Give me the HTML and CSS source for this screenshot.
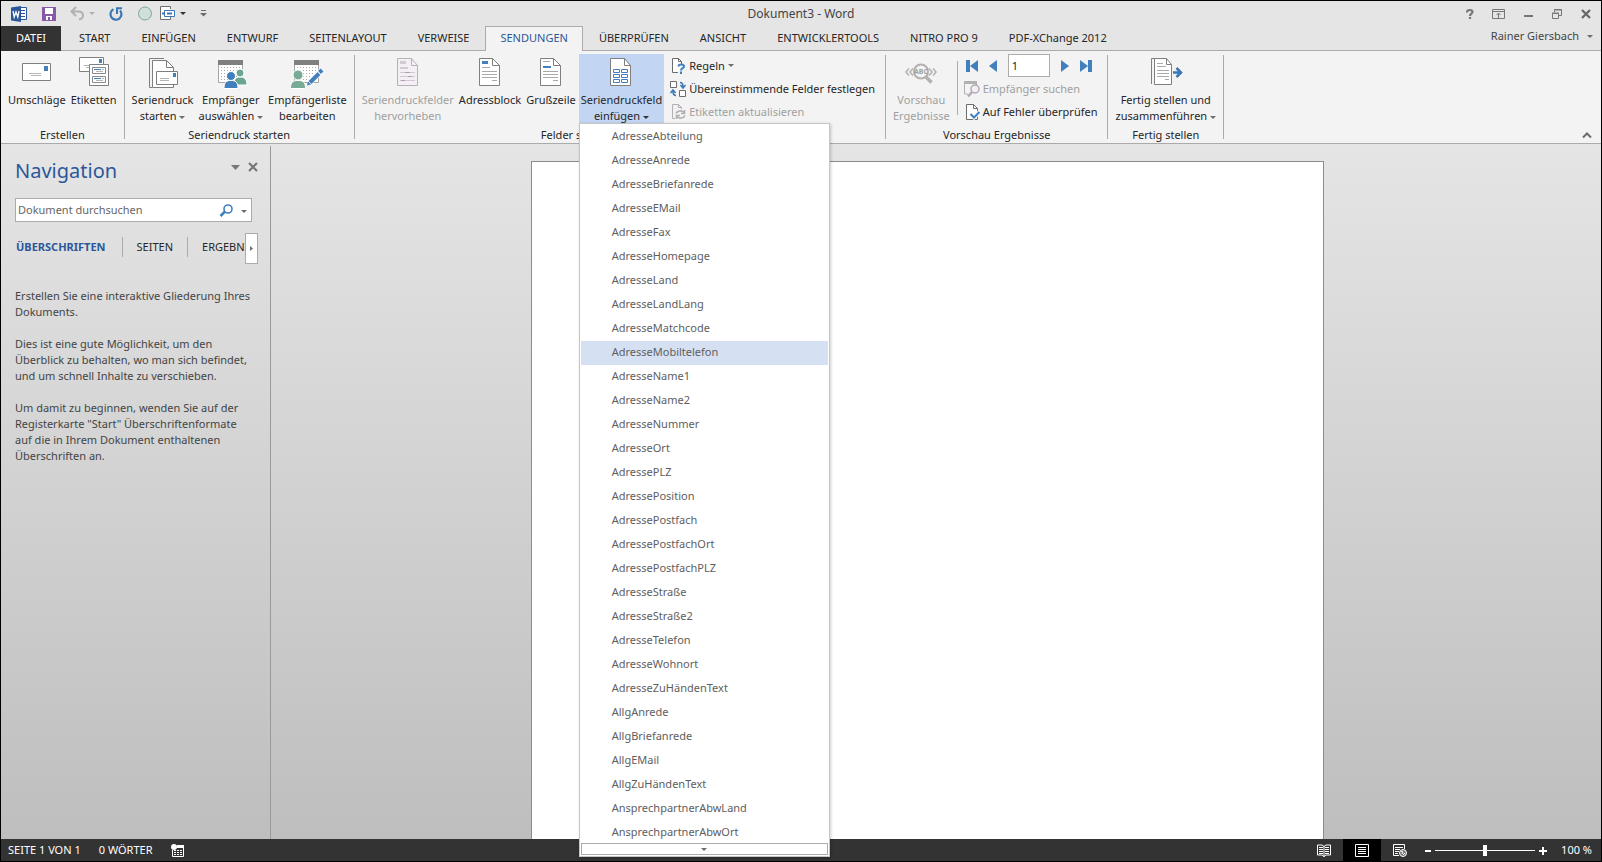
FILE: index.html
```html
<!DOCTYPE html>
<html lang="de">
<head>
    <meta charset="UTF-8">
    <meta name="viewport" content="width=device-width, initial-scale=1.0">
    <title>Dokument3 - Word</title>
    <link rel="stylesheet" href="styles.css">
</head>
<body>
    <div class="window">
        <header class="titlebar">
            <div class="quick-access">
                <button class="qa-btn" aria-label="Word">
                    <svg width="18" height="18" viewBox="0 0 18 18"><path d="M9 2.500h7.500v12H9" fill="#fff" stroke="#2b579a"/><path d="M10 5.500h5M10 8.500h5M10 11.500h5" stroke="#2b579a"/><path d="M1 2.500 11 1v16L1 15.500z" fill="#2b579a"/><path d="M3 6l1.200 6L6 7l1.800 5L9 6" fill="none" stroke="#fff" stroke-width="1.300"/></svg>
                </button>
                <button class="qa-btn" aria-label="Speichern">
                    <svg width="14" height="14" viewBox="0 0 14 14"><path d="M0 0h14v14H0z" fill="#8858a8"/><path d="M3 1h8v6H3zM4 9h6v4H8v-3H6v3H4z" fill="#fff"/></svg>
                </button>
                <button class="qa-btn" aria-label="Rückgängig">
                    <svg width="14" height="14" viewBox="0 0 14 14"><path d="M6 0 1.500 4.500 6 9M2 4.500h6c3 0 5 1.500 5 4 0 2-1.500 3.500-4 4" fill="none" stroke="#b1b1b1" stroke-width="2"/></svg>
                    <i class="caret caret-off"></i>
                </button>
                <button class="qa-btn" aria-label="Wiederholen">
                    <svg width="14" height="14" viewBox="0 0 14 14"><path d="M4.500 2.300A5.500 5.500 0 1 0 11 3.500" fill="none" stroke="#3b76b5" stroke-width="2.200"/><path d="M7 1.200h6M8 1v6" fill="none" stroke="#3b76b5" stroke-width="2"/></svg>
                </button>
                <div class="qa-pair">
                    <button class="qa-btn" aria-label="Kreis">
                        <svg width="15" height="15" viewBox="0 0 15 15"><circle cx="8" cy="7.500" r="6.500" fill="#cfe0d8" stroke="#78ab95"/></svg>
                    </button>
                    <button class="qa-btn" aria-label="Einfügen">
                        <svg width="16" height="15" viewBox="0 0 16 15"><path d="M11.500 3V.500H1.500v13h10V11" fill="#fff" stroke="#6d6d6d"/><path d="M5.500 4.500h10v6h-10z" fill="#fff" stroke="#3b76b5"/><path d="M3 7.500h3M8 7.500h5" stroke="#3b76b5" stroke-width="2"/></svg>
                        <i class="caret caret-dark"></i>
                    </button>
                </div>
                <button class="qa-btn" aria-label="Symbolleiste anpassen">
                    <svg width="7" height="7" viewBox="0 0 7 7"><path d="M1 .500h5" stroke="#6d6d6d"/><path d="M0 3h7L3.500 6.500z" fill="#6d6d6d"/></svg>
                </button>
            </div>
            <h1 class="title">Dokument3 - Word</h1>
            <div class="window-buttons">
                <button aria-label="Hilfe"><svg width="8" height="10" viewBox="0 0 8 10"><path d="M1 3.500C1 1.500 2.300 1 3.800 1S6.500 1.500 6.500 3C6.500 4.800 4 4.500 4 7M4 8v2" fill="none" stroke="#777" stroke-width="2.200"/></svg></button>
                <button aria-label="Menüband-Anzeigeoptionen"><svg width="13" height="10" viewBox="0 0 13 10"><path d="M.500.500h12v9H.500zM1 2.500h11M6.500 9V4.500M4.500 6l2-2 2 2" fill="none" stroke="#777"/></svg></button>
                <button aria-label="Minimieren"><svg width="10" height="10" viewBox="0 0 10 10"><path d="M1 7h9" stroke="#777" stroke-width="2"/></svg></button>
                <button aria-label="Wiederherstellen"><svg width="10" height="10" viewBox="0 0 10 10"><path d="M2.500 3V.500h7v6H7M2 1h8M.500 4.500h6v5h-6zM0 4h7" fill="none" stroke="#777"/></svg></button>
                <button aria-label="Schließen"><svg width="10" height="10" viewBox="0 0 10 10"><path d="M1 1l8 8M9 1 1 9" stroke="#666" stroke-width="2.200"/></svg></button>
            </div>
        </header>

        <nav class="tabs">
            <button class="tab tab-file">DATEI</button>
            <button class="tab">START</button>
            <button class="tab">EINFÜGEN</button>
            <button class="tab">ENTWURF</button>
            <button class="tab">SEITENLAYOUT</button>
            <button class="tab">VERWEISE</button>
            <button class="tab active">SENDUNGEN</button>
            <button class="tab">ÜBERPRÜFEN</button>
            <button class="tab">ANSICHT</button>
            <button class="tab">ENTWICKLERTOOLS</button>
            <button class="tab">NITRO PRO 9</button>
            <button class="tab">PDF-XChange 2012</button>
            <button class="account">Rainer Giersbach <i class="caret"></i></button>
        </nav>

        <section class="ribbon">
            <div class="group">
                <div class="group-body">
                    <button class="big">
                        <svg width="32" height="32" viewBox="0 0 32 32"><path d="M1.500 7.500h28v17h-28z" fill="#fff" stroke="#7f7f7f"/><path d="M23 10h4v5h-4z" fill="#4180bd"/><path d="M8 17.500h12M10 19.500h10" stroke="#b5b5b5"/></svg>
                        <span>Umschläge</span>
                    </button>
                    <button class="big">
                        <svg width="32" height="32" viewBox="0 0 32 32"><path d="M1.500 1.500h24v14h-24z" fill="#fff" stroke="#7f7f7f"/><path d="M21 3h3v4h-3z" fill="#4180bd"/><path d="M6 9.500h5M8 11.500h3" stroke="#b5b5b5"/><path d="M11.500 8.500h19v21h-19z" fill="#fff" stroke="#7f7f7f"/><path d="M14.500 11.500h13v6h-13zM14.500 20.500h13v6h-13z" fill="none" stroke="#8a8a8a"/><path d="M16 13.500h7M16 22.500h7" stroke="#4180bd"/><path d="M24 13.500h2M18 15.500h7M24 22.500h2M18 24.500h7" stroke="#b5b5b5"/></svg>
                        <span>Etiketten</span>
                    </button>
                </div>
                <div class="group-name">Erstellen</div>
            </div>

            <div class="group">
                <div class="group-body">
                    <button class="big">
                        <svg width="32" height="32" viewBox="0 0 32 32"><path d="M17 2.500H2.500v29H5" fill="none" stroke="#7f7f7f"/><path d="M5.500 4.500h14l7 7v20h-21z" fill="#fff" stroke="#7f7f7f"/><path d="M19.500 4.500v7h7" fill="none" stroke="#7f7f7f"/><path d="M9.500 15.500h21v13h-21z" fill="#fff" stroke="#7f7f7f"/><path d="M26 17h3v4h-3z" fill="#4180bd"/><path d="M13 22.500h9M13 24.500h9" stroke="#b5b5b5"/></svg>
                        <span>Seriendruck<br>starten <i class="caret"></i></span>
                    </button>
                    <button class="big">
                        <svg width="32" height="32" viewBox="0 0 32 32"><path d="M3.500 5.500h24v21h-24z" fill="#fff" stroke="#a5a5a5"/><path d="M3 4h25v5H3z" fill="#7f7f7f"/><path d="M6 11.500h20M6 14.500h20M6 17.500h20M6 20.500h20M6 23.500h20" stroke="#aaa" stroke-dasharray="1 2"/><g fill="#6aa68e" stroke="#fff"><path d="M19 28c0-6 3-7 6-7s7 1 7 8H19z"/><circle cx="25" cy="17" r="4"/></g><g fill="#4180bd" stroke="#fff"><path d="M9 32.500c0-7 3-8 7-8s7 1 7 8z"/><circle cx="16" cy="20" r="4.500"/></g></svg>
                        <span>Empfänger<br>auswählen <i class="caret"></i></span>
                    </button>
                    <button class="big">
                        <svg width="32" height="32" viewBox="0 0 32 32"><path d="M3.500 5.500h24v21h-24z" fill="#fff" stroke="#a5a5a5"/><path d="M3 4h25v5H3z" fill="#7f7f7f"/><path d="M6 11.500h20M6 14.500h20M6 17.500h20M6 20.500h20M6 23.500h20" stroke="#aaa" stroke-dasharray="1 2"/><g fill="#78ab95" stroke="#fff"><path d="M-.500 32.500c0-7 3-8 7.500-8s7.500 1 7.500 8z"/><circle cx="7" cy="19" r="5"/></g><path d="M18 27 30 15" stroke="#fff" stroke-width="6"/><path d="M19 26.500 28 17.500" stroke="#4180bd" stroke-width="4"/><path d="M28.500 16.500 31 14" stroke="#4180bd" stroke-width="4"/><path d="M16 29.500l1-4 3 3z" fill="#4180bd"/></svg>
                        <span>Empfängerliste<br>bearbeiten</span>
                    </button>
                </div>
                <div class="group-name">Seriendruck starten</div>
            </div>

            <div class="group">
                <div class="group-body">
                    <button class="big" disabled>
                        <svg width="32" height="32" viewBox="0 0 32 32"><path d="M5.500 2.500h14l6 7v20h-20z" fill="#f4eff5" stroke="#b7b2b8"/><path d="M19.500 2.500v7h6" fill="none" stroke="#b7b2b8"/><path d="M8 5h6v3H8zM8 11h8v2H8z" fill="#d3c9d5"/><path d="M8 16.500h15M8 20.500h15M8 24.500h15" stroke="#d3c9d5"/><path d="M13 16.500h5M16 20.500h4M9 24.500h4" stroke="#aaa3ac"/></svg>
                        <span>Seriendruckfelder<br>hervorheben</span>
                    </button>
                    <button class="big">
                        <svg width="32" height="32" viewBox="0 0 32 32"><path d="M5.500 2.500h13l7 7v20h-20z" fill="#fff" stroke="#7f7f7f"/><path d="M18.500 2.500v7h7" fill="none" stroke="#7f7f7f"/><path d="M8 5h6v3H8z" fill="#4180bd"/><path d="M8 11.500h8M8 15.500h15M8 18.500h15M8 21.500h15M18 24.500h5" stroke="#a9a9a9"/></svg>
                        <span>Adressblock</span>
                    </button>
                    <button class="big">
                        <svg width="32" height="32" viewBox="0 0 32 32"><path d="M5.500 2.500h13l7 7v20h-20z" fill="#fff" stroke="#7f7f7f"/><path d="M18.500 2.500v7h7" fill="none" stroke="#7f7f7f"/><path d="M8 10h8v2H8z" fill="#4180bd"/><path d="M8 5.500h7M8 15.500h15M8 18.500h15M8 21.500h15M18 24.500h5" stroke="#a9a9a9"/></svg>
                        <span>Grußzeile</span>
                    </button>
                    <div class="dropdown">
                        <button class="big open">
                            <svg width="32" height="32" viewBox="0 0 32 32"><path d="M5.500 2.500h14l6 7v20h-20z" fill="#fff" stroke="#7f7f7f"/><path d="M19.500 2.500v7h6" fill="none" stroke="#7f7f7f"/><path d="M8.500 13.500h6v3h-6zM16.500 13.500h6v3h-6zM8.500 18.500h6v3h-6zM16.500 18.500h6v3h-6zM8.500 23.500h6v3h-6zM16.500 23.500h6v3h-6z" fill="none" stroke="#4180bd"/></svg>
                            <span>Seriendruckfeld<br>einfügen <i class="caret caret-dark"></i></span>
                        </button>
                        <div class="menu">
                            <ul class="menu-list">
                                <li><button>AdresseAbteilung</button></li>
                                <li><button>AdresseAnrede</button></li>
                                <li><button>AdresseBriefanrede</button></li>
                                <li><button>AdresseEMail</button></li>
                                <li><button>AdresseFax</button></li>
                                <li><button>AdresseHomepage</button></li>
                                <li><button>AdresseLand</button></li>
                                <li><button>AdresseLandLang</button></li>
                                <li><button>AdresseMatchcode</button></li>
                                <li><button class="selected">AdresseMobiltelefon</button></li>
                                <li><button>AdresseName1</button></li>
                                <li><button>AdresseName2</button></li>
                                <li><button>AdresseNummer</button></li>
                                <li><button>AdresseOrt</button></li>
                                <li><button>AdressePLZ</button></li>
                                <li><button>AdressePosition</button></li>
                                <li><button>AdressePostfach</button></li>
                                <li><button>AdressePostfachOrt</button></li>
                                <li><button>AdressePostfachPLZ</button></li>
                                <li><button>AdresseStraße</button></li>
                                <li><button>AdresseStraße2</button></li>
                                <li><button>AdresseTelefon</button></li>
                                <li><button>AdresseWohnort</button></li>
                                <li><button>AdresseZuHändenText</button></li>
                                <li><button>AllgAnrede</button></li>
                                <li><button>AllgBriefanrede</button></li>
                                <li><button>AllgEMail</button></li>
                                <li><button>AllgZuHändenText</button></li>
                                <li><button>AnsprechpartnerAbwLand</button></li>
                                <li><button>AnsprechpartnerAbwOrt</button></li>
                            </ul>
                            <button class="menu-more" aria-label="Weitere Felder"><i class="caret"></i></button>
                        </div>
                    </div>
                    <div class="stack">
                        <button class="small">
                            <svg width="16" height="16" viewBox="0 0 16 16"><path d="M8 14.500H2.500V.500h6l3 3V6" fill="#fff" stroke="#6d6d6d"/><path d="M8.500.500v3h3" fill="none" stroke="#6d6d6d"/><path d="M8.500 8.500C8.500 7 9.500 6.500 11 6.500s3 .500 3 2c0 2-3 1.500-3 4M11 13.500V16" fill="none" stroke="#4180bd" stroke-width="2"/></svg>
                            Regeln <i class="caret"></i>
                        </button>
                        <button class="small">
                            <svg width="16" height="16" viewBox="0 0 16 16"><path d="M.500.500h6v6h-6zM9.500 9.500h6v6h-6z" fill="#fff" stroke="#6d6d6d"/><path d="M10 1.500c2 0 3 1 3 4M10.500 4l2.500 3 2.500-3M6 14.500c-2 0-3-1-3-4M.500 12 3 9l2.500 3" fill="none" stroke="#3b76b5" stroke-width="1.500"/></svg>
                            Übereinstimmende Felder festlegen
                        </button>
                        <button class="small" disabled>
                            <svg width="16" height="16" viewBox="0 0 16 16"><path d="M5 14.500H2.500V.500h6l3 3V5" fill="#f4eff5" stroke="#b1b1b1"/><path d="M8.500.500v3h3" fill="none" stroke="#b1b1b1"/><path d="M6 9.500c1-3 6-3.500 8-1M14.500 6v3.500H11M15 11.500c-1 3-6 3.500-8 1M6.500 15v-3.500H10" fill="none" stroke="#b1b1b1" stroke-width="1.600"/></svg>
                            Etiketten aktualisieren
                        </button>
                    </div>
                </div>
                <div class="group-name">Felder schreiben und einfügen</div>
            </div>

            <div class="group">
                <div class="group-body">
                    <button class="big" disabled>
                        <svg width="32" height="32" viewBox="0 0 32 32"><path d="M4 12.500l-3 3.500 3 3.500M8 12.500 5 16l3 3.500M24 12.500l3 3.500-3 3.500M28 12.500l3 3.500-3 3.500" fill="none" stroke="#b1b1b1" stroke-width="1.500"/><circle cx="16" cy="15.500" r="7" fill="#f4f4f4" stroke="#b1b1b1" stroke-width="2"/><path d="M20.500 20.500l6 6" stroke="#b1b1b1" stroke-width="3.500"/><text x="9" y="18" class="icon-text">ABC</text></svg>
                        <span>Vorschau<br>Ergebnisse</span>
                    </button>
                    <div class="divider"></div>
                    <div class="stack">
                        <div class="records">
                            <button aria-label="Erster Datensatz"><svg width="12" height="12" viewBox="0 0 12 12"><path d="M0 0h4v12H0zM12 0v12L4 6z" fill="#4180bd"/></svg></button>
                            <button aria-label="Vorheriger Datensatz"><svg width="8" height="12" viewBox="0 0 8 12"><path d="M8 0v12L0 6z" fill="#4180bd"/></svg></button>
                            <input type="text" value="1" aria-label="Datensatz">
                            <button aria-label="Nächster Datensatz"><svg width="8" height="12" viewBox="0 0 8 12"><path d="M0 0v12l8-6z" fill="#4180bd"/></svg></button>
                            <button aria-label="Letzter Datensatz"><svg width="12" height="12" viewBox="0 0 12 12"><path d="M8 0h4v12H8zM0 0v12l8-6z" fill="#4180bd"/></svg></button>
                        </div>
                        <button class="small" disabled>
                            <svg width="16" height="16" viewBox="0 0 16 16"><path d="M.500 1v12H4M12.500 1v3" fill="none" stroke="#b1b1b1"/><path d="M0 0h13v3H0z" fill="#b1b1b1"/><circle cx="11" cy="8" r="4" fill="#f4eff5" stroke="#b1a9b3" stroke-width="1.500"/><path d="M8 11l-4 4.500" stroke="#b1a9b3" stroke-width="2.500"/></svg>
                            Empfänger suchen
                        </button>
                        <button class="small">
                            <svg width="16" height="16" viewBox="0 0 16 16"><path d="M2.500.500h7l4 4v11h-11z" fill="#fff" stroke="#6d6d6d"/><path d="M9.500.500v4h4" fill="none" stroke="#6d6d6d"/><path d="M6.500 10l3.500 3.500L15.500 8" fill="none" stroke="#fff" stroke-width="4"/><path d="M6.500 10l3.500 3.500L15.500 8" fill="none" stroke="#4180bd" stroke-width="2"/></svg>
                            Auf Fehler überprüfen
                        </button>
                    </div>
                </div>
                <div class="group-name">Vorschau Ergebnisse</div>
            </div>

            <div class="group">
                <div class="group-body">
                    <button class="big">
                        <svg width="32" height="32" viewBox="0 0 32 32"><path d="M16 2.500H1.500V28" fill="none" stroke="#7f7f7f"/><path d="M4.500 3v25" stroke="#7f7f7f"/><path d="M4.500 2.500h12l5 6v20h-17z" fill="#fff" stroke="#7f7f7f"/><path d="M16.500 2.500v6h5" fill="none" stroke="#7f7f7f"/><path d="M7 7.500h6M7 10.500h9M7 14.500h12M7 17.500h12M7 20.500h12M15 23.500h4" stroke="#a9a9a9"/><path d="M23 16.500h8M26.500 12l4.500 4.500-4.500 4.500" fill="none" stroke="#3b76b5" stroke-width="2.500"/></svg>
                        <span>Fertig stellen und<br>zusammenführen <i class="caret"></i></span>
                    </button>
                </div>
                <div class="group-name">Fertig stellen</div>
            </div>

            <button class="collapse" aria-label="Menüband reduzieren"><svg width="10" height="7" viewBox="0 0 10 7"><path d="M1 5.500l4-4 4 4" fill="none" stroke="#6d6d6d" stroke-width="2"/></svg></button>
        </section>

        <main class="workspace">
            <aside class="nav-pane">
                <div class="nav-head">
                    <h2>Navigation</h2>
                    <button aria-label="Optionen"><svg width="9" height="5" viewBox="0 0 9 5"><path d="M0 0h9L4.500 5z" fill="#777"/></svg></button>
                    <button aria-label="Schließen"><svg width="10" height="10" viewBox="0 0 10 10"><path d="M1 1l8 8M9 1 1 9" stroke="#777" stroke-width="2.200"/></svg></button>
                </div>
                <div class="search">
                    <input type="text" placeholder="Dokument durchsuchen" aria-label="Dokument durchsuchen">
                    <button aria-label="Suchen"><svg width="14" height="13" viewBox="0 0 14 13"><circle cx="9" cy="5" r="4" fill="none" stroke="#4180bd" stroke-width="1.600"/><path d="M6 7.500 1.500 12" stroke="#4180bd" stroke-width="2.500"/></svg></button>
                    <button aria-label="Suchoptionen"><i class="caret"></i></button>
                </div>
                <div class="nav-tabs">
                    <button class="current">ÜBERSCHRIFTEN</button>
                    <button>SEITEN</button>
                    <button>ERGEBNISSE</button>
                    <button class="nav-scroll" aria-label="Weiter"><svg width="3" height="5" viewBox="0 0 3 5"><path d="M0 0v5l3-2.500z" fill="#6d6d6d"/></svg></button>
                </div>
                <div class="nav-text">
                    <p>Erstellen Sie eine interaktive Gliederung Ihres Dokuments.</p>
                    <p>Dies ist eine gute Möglichkeit, um den Überblick zu behalten, wo man sich befindet, und um schnell Inhalte zu verschieben.</p>
                    <p>Um damit zu beginnen, wenden Sie auf der Registerkarte "Start" Überschriftenformate auf die in Ihrem Dokument enthaltenen Überschriften an.</p>
                </div>
            </aside>
            <div class="canvas">
                <div class="page"></div>
            </div>
        </main>

        <footer class="statusbar">
            <button>SEITE 1 VON 1</button>
            <button>0 WÖRTER</button>
            <button aria-label="Makro aufzeichnen"><svg width="13" height="13" viewBox="0 0 13 13"><path d="M6 1h7v3H6z" fill="#fff"/><path d="M1.500 6v6.500h11V4M3 6.500h8M3 8.500h8M3 10.500h8" fill="none" stroke="#fff"/><path d="M5.500 5v7M8.500 5v7" stroke="#333"/><circle cx="3" cy="3" r="3" fill="#fff"/></svg></button>
            <div class="status-right">
                <div class="views">
                    <button aria-label="Lesemodus"><svg width="14" height="13" viewBox="0 0 14 13"><path d="M.500 1v10H5l2 1.500L9 11h4.500V1H9L7 2.500 5 1zM7 2v11" fill="none" stroke="#fff"/><path d="M2 3.500h4M2 5.500h4M2 7.500h4M2 9.500h4M8 3.500h4M8 5.500h4M8 7.500h4M8 9.500h4" stroke="#fff"/></svg></button>
                    <button class="active" aria-label="Seitenlayout"><svg width="14" height="13" viewBox="0 0 14 13"><path d="M.500.500h13v12H.500zM3 3.500h8M3 5.500h8M3 7.500h8M3 9.500h8" fill="none" stroke="#fff"/></svg></button>
                    <button aria-label="Weblayout"><svg width="14" height="13" viewBox="0 0 14 13"><path d="M6 11.500H.500V.500h11V5M2 3.500h8M2 5.500h5M2 7.500h4M2 9.500h3" fill="none" stroke="#fff"/><circle cx="10" cy="9" r="3.500" fill="#777" stroke="#fff"/><path d="M8 7l2 1-1 2M10 11l2-2" fill="none" stroke="#fff"/></svg></button>
                </div>
                <div class="zoom">
                    <button aria-label="Verkleinern"><svg width="6" height="9" viewBox="0 0 6 9"><path d="M0 5h6" stroke="#fff" stroke-width="2"/></svg></button>
                    <input type="range" min="0" max="200" value="100" aria-label="Zoom">
                    <button aria-label="Vergrößern"><svg width="8" height="9" viewBox="0 0 8 9"><path d="M0 5h8M4 1v8" stroke="#fff" stroke-width="2"/></svg></button>
                    <button class="zoom-value">100 %</button>
                </div>
            </div>
        </footer>
    </div>
</body>
</html>
```

FILE: styles.css
```css
* {
    margin: 0;
    padding: 0;
    box-sizing: border-box;
}

body {
    height: 100vh;
    overflow: hidden;
    font-family: "Noto Sans", "Open Sans", sans-serif;
    font-size: 11px;
    line-height: 16px;
    color: #262626;
}

button,
input {
    font: inherit;
    color: inherit;
    background: none;
    border: none;
    white-space: nowrap;
}

svg {
    display: block;
    flex: none;
    overflow: visible;
}

.window {
    height: 100vh;
    display: flex;
    flex-direction: column;
    border: 1px solid #000;
    background: #e5e5e5;
}

.caret {
    display: inline-block;
    vertical-align: middle;
    border: 3px solid transparent;
    border-top-color: #6d6d6d;
    border-bottom: none;
}

.caret-off {
    border-top-color: #b1b1b1;
}

.caret-dark {
    border-top-color: #333;
}

/* Title bar */
.titlebar {
    height: 25px;
    display: grid;
    grid-template-columns: 1fr auto 1fr;
    align-items: center;
}

.quick-access {
    display: flex;
    align-items: center;
    gap: 14px;
    padding-left: 9px;
}

.qa-btn {
    display: flex;
    align-items: center;
    gap: 5px;
}

.qa-pair {
    display: flex;
    gap: 7px;
}

.title {
    font-size: 12px;
    font-weight: normal;
    color: #444;
}

.window-buttons {
    display: flex;
    justify-content: flex-end;
    padding-right: 1px;
}

.window-buttons button {
    width: 29px;
    height: 24px;
    display: flex;
    align-items: center;
    justify-content: center;
}

/* Tabs */
.tabs {
    height: 25px;
    display: flex;
    gap: 1px;
    border-bottom: 1px solid #ababab;
}

.tab {
    height: 25px;
    padding: 0 14px 2px;
    border: 1px solid transparent;
    border-bottom: none;
}

.tab-file {
    background: #333;
    color: #fff;
    margin-right: 2px;
}

.tab.active {
    background: #f3f3f3;
    border-color: #ababab;
    color: #2b579a;
}

.account {
    display: flex;
    align-items: center;
    gap: 8px;
    margin-left: auto;
    padding: 0 8px 4px 0;
    color: #444;
}

/* Ribbon */
.ribbon {
    position: relative;
    z-index: 1;
    height: 93px;
    display: flex;
    padding-top: 3px;
    background: #f3f3f3;
    border-bottom: 1px solid #ababab;
}

.group {
    position: relative;
    display: flex;
    flex-direction: column;
    padding: 0 6px 0 5px;
}

.group::after {
    content: '';
    position: absolute;
    top: 1px;
    right: 0;
    bottom: 4px;
    width: 1px;
    background: #ababab;
}

.group-body {
    display: flex;
    flex: 1;
    gap: 1px;
}

.group-name {
    height: 16px;
    text-align: center;
}

.big {
    height: 69px;
    display: flex;
    flex-direction: column;
    align-items: center;
    padding: 2px 2px 0;
}

.big span {
    margin-top: 4px;
}

.open {
    background: #c2d5f2;
}

button:disabled {
    color: #a0a0a0;
}

.icon-text {
    font-size: 7px;
    font-weight: bold;
    fill: #a0a0a0;
}

.divider {
    width: 1px;
    margin: 7px 0 12px 4px;
    background: #ababab;
}

.stack {
    display: flex;
    flex-direction: column;
    padding: 0 5px;
}

.small {
    height: 23px;
    display: flex;
    align-items: center;
    gap: 3px;
}

.records {
    height: 23px;
    display: flex;
    align-items: center;
    gap: 11px;
    padding-left: 2px;
}

.records input {
    width: 42px;
    height: 23px;
    padding: 0 3px;
    background: #fff;
    border: 1px solid #ababab;
}

.collapse {
    align-self: flex-end;
    margin-left: auto;
    padding: 4px 9px;
}

/* Merge field menu */
.dropdown {
    position: relative;
}

.menu {
    position: absolute;
    top: 69px;
    left: 0;
    width: 251px;
    padding: 1px;
    background: #fff;
    border: 1px solid #c6c6c6;
    box-shadow: 1px 1px 3px rgba(0, 0, 0, 0.2);
}

.menu-list {
    height: 718px;
    overflow: hidden;
    list-style: none;
}

.menu-list button {
    display: block;
    width: 100%;
    height: 24px;
    padding: 0 0 2px 31px;
    text-align: left;
    color: #5e5e5e;
}

.menu-list .selected {
    background: #d5e1f2;
}

.menu-more {
    width: 100%;
    height: 12px;
    display: flex;
    align-items: center;
    justify-content: center;
    border: 1px solid #ababab;
}

/* Workspace */
.workspace {
    flex: 1;
    min-height: 0;
    display: flex;
    background: linear-gradient(#e5e5e5, #bebebe);
}

.nav-pane {
    width: 270px;
    margin-top: 2px;
    padding: 10px 12px 0 14px;
    border-right: 1px solid #999;
    color: #444;
}

.nav-head {
    display: flex;
    align-items: flex-start;
    gap: 8px;
}

.nav-head h2 {
    flex: 1;
    font-size: 20px;
    line-height: 30px;
    font-weight: normal;
    color: #2b579a;
}

.nav-head button {
    height: 22px;
}

.search {
    display: flex;
    align-items: center;
    gap: 8px;
    height: 24px;
    margin: 12px 6px 0 0;
    padding-right: 4px;
    background: #fff;
    border: 1px solid #ababab;
}

.search input {
    flex: 1;
    min-width: 0;
    padding-left: 2px;
}

.search input::placeholder {
    color: #666;
}

.nav-tabs {
    position: relative;
    display: flex;
    height: 31px;
    margin-top: 11px;
    padding-top: 4px;
    overflow: hidden;
    color: #262626;
}

.nav-tabs button {
    height: 20px;
    padding: 0 14px;
}

.nav-tabs button + button {
    border-left: 1px solid #ababab;
}

.nav-tabs .current {
    padding: 0 16px 0 1px;
    font-weight: bold;
    color: #2b579a;
}

.nav-tabs .nav-scroll {
    position: absolute;
    top: 0;
    right: 0;
    width: 13px;
    height: 31px;
    padding: 0 4px;
    background: #fff;
    border: 1px solid #ababab;
}

.nav-text {
    display: flex;
    flex-direction: column;
    gap: 16px;
    margin-top: 24px;
    padding-right: 7px;
}

.canvas {
    flex: 1;
    display: flex;
    justify-content: center;
    padding: 17px 18px 0 0;
}

.page {
    width: 100%;
    max-width: 793px;
    background: #fff;
    border: 1px solid #8c8c8c;
    border-bottom: none;
}

/* Status bar */
.statusbar {
    height: 22px;
    display: flex;
    align-items: center;
    gap: 18px;
    padding: 0 9px 0 7px;
    background: #333;
    color: #fff;
}

.status-right {
    display: flex;
    align-items: center;
    gap: 6px;
    margin-left: auto;
}

.views {
    display: flex;
}

.views button {
    width: 38px;
    height: 22px;
    display: flex;
    align-items: center;
    justify-content: center;
}

.views .active {
    background: #000;
}

.zoom {
    display: flex;
    align-items: center;
    gap: 4px;
}

.zoom input {
    width: 100px;
    height: 12px;
    appearance: none;
    background: linear-gradient(#fff, #fff) center / 100% 1px no-repeat;
}

.zoom input::-webkit-slider-thumb {
    appearance: none;
    width: 4px;
    height: 11px;
    background: #fff;
}

.zoom-value {
    margin-left: 10px;
}
```
